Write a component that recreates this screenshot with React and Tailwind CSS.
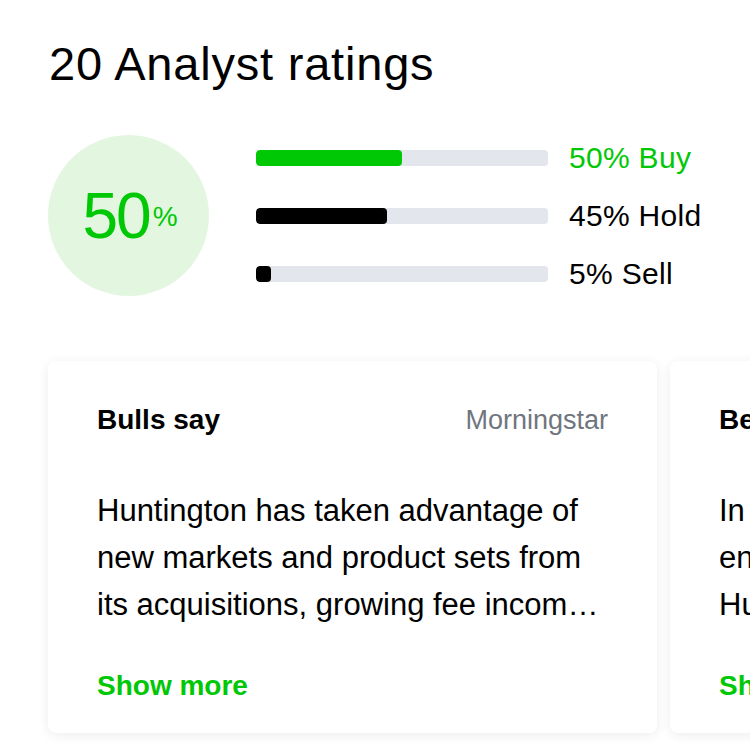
import React from "react";

const ratings = [
  { label: "Buy", pct: 50, bar: "bg-[#00c805]", text: "text-[#00c805]" },
  { label: "Hold", pct: 45, bar: "bg-black", text: "text-black" },
  { label: "Sell", pct: 5, bar: "bg-black", text: "text-black" },
];

const cards = [
  {
    title: "Bulls say",
    source: "Morningstar",
    body: "Huntington has taken advantage of new markets and product sets from its acquisitions, growing fee income and diversifying its revenue base.",
  },
  {
    title: "Bears say",
    source: "Morningstar",
    body: "In a weaker economy, the bank may encounter higher credit costs, as Huntington's commercial loan book is sensitive to the cycle.",
  },
];

const App = () => {
  return (
    <div
      className="w-[750px] h-[745px] overflow-hidden bg-white text-black"
      style={{ fontFamily: '"Liberation Sans", Arial, sans-serif' }}
    >
      {/* Header */}
      <h1 className="pl-[49px] pt-[38px] text-[47px] leading-[52px] tracking-[0.8px]">
        20 Analyst ratings
      </h1>

      {/* Summary */}
      <div className="flex items-center pl-[48px] pt-[45px]">
        <div className="flex items-center justify-center w-[161px] h-[161px] rounded-full bg-[#e3f7e0]">
          <span className="text-[64px] leading-none text-[#00c805] tracking-[-2px] ml-[3px]">
            50
          </span>
          <span className="text-[28px] leading-none text-[#00c805] mt-[2px] ml-[3px]">
            %
          </span>
        </div>
        <div className="flex flex-col gap-[32px] ml-[47px]">
          {ratings.map((r) => (
            <div key={r.label} className="flex items-center h-[26px]">
              <div className="w-[292px] h-[16px] rounded-[4px] bg-[#e3e6ec] overflow-hidden">
                <div
                  className={`h-full rounded-[4px] ${r.bar}`}
                  style={{ width: `${r.pct}%` }}
                />
              </div>
              <span className={`ml-[21px] text-[30px] leading-none tracking-[0.3px] ${r.text}`}>
                {r.pct}% {r.label}
              </span>
            </div>
          ))}
        </div>
      </div>

      {/* Cards */}
      <div className="flex gap-[13px] pl-[48px] pt-[65px]">
        {cards.map((c) => (
          <div
            key={c.title}
            className="shrink-0 w-[609px] h-[372px] rounded-[8px] bg-white shadow-[0_2px_12px_rgba(0,0,0,0.08)] px-[49px] pt-[38px]"
          >
            <div className="flex items-baseline justify-between">
              <span className="text-[28px] font-bold">{c.title}</span>
              <span className="text-[27px] text-[#6f767e]">{c.source}</span>
            </div>
            <p className="mt-[46px] text-[31px] leading-[47px] line-clamp-3">
              {c.body}
            </p>
            <div className="mt-[37px] text-[28px] font-bold text-[#00c805]">
              Show more
            </div>
          </div>
        ))}
      </div>
    </div>
  );
};

export default App;
